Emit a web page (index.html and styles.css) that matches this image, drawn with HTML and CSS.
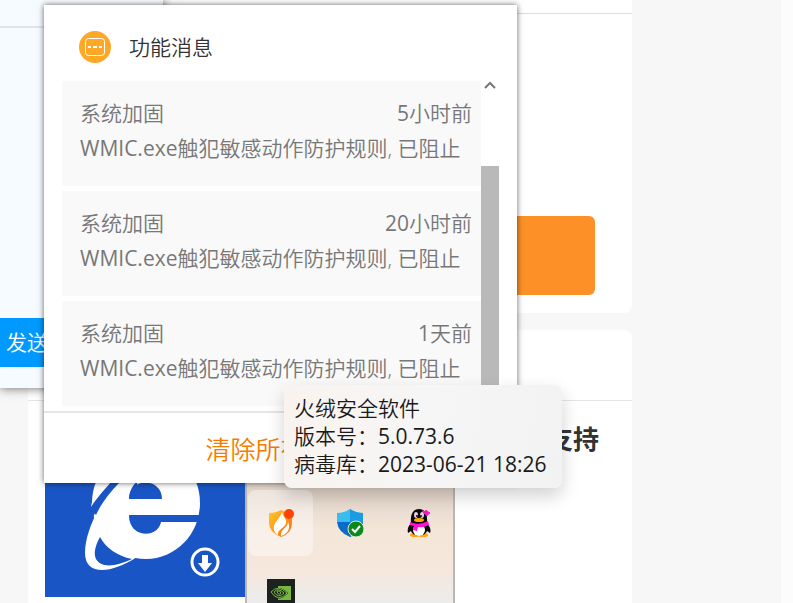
FILE: index.html
```
<!DOCTYPE html>
<html lang="zh-CN">
<head>
    <meta charset="utf-8">
    <meta name="viewport" content="width=device-width, initial-scale=1">
    <title>功能消息</title>
    <link rel="stylesheet" href="styles.css">
</head>
<body>
    <main class="page">
        <section class="card card-top">
            <div class="card-bar"></div>
            <button type="button" class="cta" aria-label="下载"></button>
        </section>
        <section class="card card-bottom">
            <div class="card-head"></div>
            <div class="card-body">
                <svg class="tile" viewBox="0 0 200 140" role="img" aria-label="Internet Explorer">
                    <rect width="200" height="140" fill="#1955c4"/>
                    <!-- globe -->
                    <ellipse cx="101" cy="46" rx="54" ry="56" fill="#fff"/>
                    <path d="M84 42 C84 20 117 20 117 42 Z" fill="#1955c4"/>
                    <path d="M84 58 H157 V65 H116 C113 81 87 81 84 62 Z" fill="#1955c4"/>
                    <!-- orbit -->
                    <path d="M78 18 C62 28 50 40 44 56 L46 66 C52 48 62 36 80 20 Z" fill="#1955c4"/>
                    <path d="M80 20 C58 38 40 72 40 96 C40 119 66 117 92 100 L84 50 Z" fill="#fff"/>
                    <path d="M45 51 C48 41 55 31 66 20 L76 24 C64 36 56 47 51 58 Z" fill="#1955c4"/>
                    <path d="M46 50 C48 39 51 31 56 24 L67 24 C58 34 51 42 46 50 Z" fill="#fff"/>
                    <path d="M84 42 C84 35 88 27 92 25 L92 42 Z" fill="#1955c4"/>
                    <path d="M84 58 H92 V74 C86 70 84 65 84 58 Z" fill="#1955c4"/>
                    <path d="M55 80 C61 91 72 99 87 102 C70 110 56 111 51 102 C48 96 51 87 55 80 Z" fill="#1955c4"/>
                    <circle cx="160" cy="105" r="13" fill="none" stroke="#fff" stroke-width="3"/>
                    <path d="M157 98 h6 v8 h4 l-7 9 -7 -9 h4 z" fill="#fff"/>
                </svg>
                <h2 class="card-title">支持</h2>
            </div>
        </section>
    </main>

    <section class="window chat">
        <div class="chat-toolbar"></div>
        <button type="button" class="send">发送</button>
    </section>

    <section class="window tray">
        <button type="button" class="tray-item active" aria-label="火绒安全软件">
            <svg width="28" height="28" viewBox="0 0 28 28">
                <defs>
                    <linearGradient id="fire" x2="1" y2="1">
                        <stop offset="0" stop-color="#ffc927"/>
                        <stop offset="1" stop-color="#fb6b0c"/>
                    </linearGradient>
                </defs>
                <path d="M2 4 Q9 4 14 1 Q19 4 25 4 V14 Q25 24 14 28 Q2 23 2 14 Z" fill="url(#fire)"/>
                <path d="M15 3 C14 9 5 14 7 21 C8 24 9 25 11 26 C10 20 18 19 19 14 C20 10 16 8 15 3 Z" fill="#fff"/>
                <path d="M21 13 C21 19 13 20 14 27 C21 25 24 19 21 13 Z" fill="#fff"/>
                <circle cx="22" cy="5" r="5" fill="#ff4307"/>
            </svg>
        </button>
        <button type="button" class="tray-item" aria-label="Windows 安全中心">
            <svg width="28" height="28" viewBox="0 0 28 28">
                <path d="M1 4 Q8 4 14 0 Q20 4 27 4 V13 H1 Z" fill="#38bdf0"/>
                <path d="M14 0 Q20 4 27 4 V13 H14 Z" fill="#1b9be4"/>
                <path d="M1 13 H27 Q26 23 14 28 Q2 23 1 13 Z" fill="#0b6bc9"/>
                <path d="M14 13 H27 Q26 23 14 28 Z" fill="#1282d8"/>
                <circle cx="20" cy="20" r="8" fill="#0b8a1c" stroke="#e9e2da"/>
                <path d="M16 20 l3 3 5 -6" fill="none" stroke="#fff" stroke-width="2"/>
            </svg>
        </button>
        <button type="button" class="tray-item" aria-label="QQ">
            <svg width="28" height="28" viewBox="0 0 28 28">
                <ellipse cx="10" cy="26" rx="5" ry="2" fill="#ffa50a"/>
                <ellipse cx="18" cy="26" rx="5" ry="2" fill="#ffa50a"/>
                <path d="M6 14 C5 4 9 0 14 0 C19 0 23 4 22 14 C26 19 26 22 25 24 L22 22 C20 28 8 28 6 22 L3 24 C2 21 3 17 6 14 Z" fill="#080808"/>
                <ellipse cx="14" cy="21" rx="6" ry="6" fill="#fff"/>
                <ellipse cx="11" cy="6" rx="2" ry="3" fill="#e9c9e5"/>
                <ellipse cx="17" cy="6" rx="2" ry="3" fill="#e9c9e5"/>
                <circle cx="12" cy="7" r="1" fill="#000"/>
                <circle cx="16" cy="7" r="1" fill="#000"/>
                <ellipse cx="14" cy="11" rx="5" ry="2" fill="#ffa50a"/>
                <path d="M5 13 Q14 17 23 12 L24 16 Q18 19 13 18 L12 22 L8 21 L9 17 L5 16 Z" fill="#ff10d0"/>
                <path d="M17 2 L20 3 L21 1 L23 3 L25 4 L23 5 L22 7 L20 5 Z" fill="#ff10d0" stroke="#ff10d0"/>
            </svg>
        </button>
        <button type="button" class="tray-item" aria-label="NVIDIA">
            <svg width="28" height="28" viewBox="0 0 28 28">
                <rect width="28" height="28" fill="#1d2120"/>
                <path d="M11 7 H24 V21 H11 Z" fill="#77b83f"/>
                <path d="M3 14 Q11 4 21 14 Q11 25 3 14 Z" fill="#1d2120"/>
                <path d="M4 13 Q11 5 20 14 Q11 24 4 13 Z M7 13 Q11 8 17 14 Q11 20 7 13 Z M10 12 q3 -1 4 2 q-3 3 -4 -2" fill="none" stroke="#77b83f" stroke-width="1"/>
            </svg>
        </button>
    </section>

    <section class="window popup">
        <header class="popup-header">
            <svg width="32" height="32" viewBox="0 0 32 32" aria-hidden="true">
                <circle cx="16" cy="16" r="16" fill="#ffa726"/>
                <rect x="6.5" y="7.5" width="19" height="17" rx="3" fill="none" stroke="#fff"/>
                <path d="M9 16 h3 M14 16 h4 M20 16 h3" stroke="#fff" stroke-width="2"/>
            </svg>
            <h1 class="popup-title">功能消息</h1>
        </header>
        <div class="messages">
            <ul class="message-list">
                <li class="message">
                    <div class="message-head"><span>系统加固</span><time><span class="latin">5</span>小时前</time></div>
                    <p><span class="latin">WMIC.exe</span>触犯敏感动作防护规则, 已阻止</p>
                </li>
                <li class="message">
                    <div class="message-head"><span>系统加固</span><time><span class="latin">20</span>小时前</time></div>
                    <p><span class="latin">WMIC.exe</span>触犯敏感动作防护规则, 已阻止</p>
                </li>
                <li class="message">
                    <div class="message-head"><span>系统加固</span><time><span class="latin">1</span>天前</time></div>
                    <p><span class="latin">WMIC.exe</span>触犯敏感动作防护规则, 已阻止</p>
                </li>
            </ul>
            <div class="scrollbar">
                <svg width="18" height="10" viewBox="0 0 18 10" aria-hidden="true">
                    <path d="M4 7 L9 2 L14 7" fill="none" stroke="#777" stroke-width="2"/>
                </svg>
                <div class="thumb"></div>
            </div>
        </div>
        <footer class="popup-footer">
            <button type="button" class="clear">清除所有消息</button>
        </footer>
    </section>

    <div class="window tooltip" role="tooltip">
        <div>火绒安全软件</div>
        <div>版本号：<span class="latin">5.0.73.6</span></div>
        <div>病毒库：<span class="latin">2023-06-21 18:26</span></div>
    </div>
</body>
</html>
```
FILE: styles.css
```
* {
    box-sizing: border-box;
}
body {
    margin: 0;
    min-height: 100vh;
    position: relative;
    overflow: hidden;
    background: #f7f7f7;
    font-family: 'Open Sans', 'Noto Sans CJK SC', sans-serif;
    font-size: 21px;
    font-weight: 350;
    color: #333;
}
h1, h2, p, ul {
    margin: 0;
    padding: 0;
}
button {
    border: none;
    padding: 0;
    font: inherit;
    cursor: pointer;
}
.latin {
    font-weight: 400;
}

/* page behind the windows */
.page {
    display: flex;
    flex-direction: column;
    gap: 17px;
    height: 100vh;
    padding: 0 149px 0 28px;
    border-right: 12px solid #fcfcfc;
}
.card {
    background: #fff;
    border-radius: 8px;
}
.card-top {
    display: flex;
    flex-direction: column;
    border-top-left-radius: 0;
    border-top-right-radius: 0;
    padding-bottom: 18px;
}
.card-bar {
    height: 14px;
    border-bottom: 1px solid #ddd;
}
.cta {
    align-self: flex-end;
    width: 240px;
    height: 79px;
    margin: 202px 37px 0 0;
    border-radius: 6px;
    background: #fd9127;
}
.card-bottom {
    flex: 1;
    border-bottom-left-radius: 0;
    border-bottom-right-radius: 0;
}
.card-head {
    height: 71px;
    border-bottom: 1px solid #e5e5e5;
}
.card-body {
    display: flex;
    justify-content: space-between;
    padding: 20px 33px 0 17px;
}
.tile {
    width: 200px;
    height: 140px;
    margin-top: 36px;
}
.card-title {
    font-size: 26px;
    line-height: 36px;
    font-weight: 700;
}

/* floating windows */
.window {
    position: absolute;
}
.chat {
    left: 0;
    top: 0;
    width: 163px;
    height: 388px;
    display: flex;
    flex-direction: column;
    justify-content: space-between;
    padding-bottom: 21px;
    background: #f6fbff;
    box-shadow: 0 0 10px rgba(0,0,0,0.6);
}
.chat-toolbar {
    height: 28px;
    border-bottom: 2px solid #dfe5ea;
}
.send {
    height: 49px;
    padding: 0 0 4px 6px;
    background: #0099ff;
    color: #fff;
    text-align: left;
}
.tray {
    left: 245px;
    top: 420px;
    width: 210px;
    height: 183px;
    display: grid;
    grid-template-columns: repeat(3, 65px);
    grid-auto-rows: 66px;
    gap: 4px;
    padding: 70px 1px 0;
    border: solid #b9b6b4;
    border-width: 0 2px;
    background: linear-gradient(#dccfc4 60px, #f5e6da 110px, #f5e7dc 150px, #ececec);
    overflow: hidden;
}
.tray-item {
    display: flex;
    align-items: center;
    justify-content: center;
    padding-bottom: 1px;
    border-radius: 8px;
    background: none;
}
.tray-item.active {
    background: rgba(255,255,255,0.4);
}
.popup {
    left: 44px;
    top: 5px;
    width: 473px;
    background: #fff;
    box-shadow: 0 0 6px rgba(0,0,0,0.6);
}
.popup-header {
    display: flex;
    align-items: center;
    gap: 18px;
    height: 76px;
    padding: 8px 35px 0;
}
.popup-title {
    font-size: 21px;
    line-height: 28px;
    font-weight: 350;
}
.messages {
    display: flex;
    padding: 0 18px 5px;
}
.message-list {
    flex: 1;
    display: flex;
    flex-direction: column;
    gap: 5px;
    list-style: none;
}
.message {
    height: 105px;
    padding: 15px 9px 0 18px;
    background: #f9f9f9;
    color: #777;
    line-height: 35px;
    white-space: nowrap;
}
.message-head {
    display: flex;
    justify-content: space-between;
}
.scrollbar {
    width: 18px;
    display: flex;
    flex-direction: column;
}
.thumb {
    flex: 1;
    margin-top: 75px;
    background: #b9b9b9;
}
.popup-footer {
    display: flex;
    justify-content: center;
    align-items: center;
    height: 72px;
    border-top: 2px solid #e5e5e5;
}
.clear {
    background: none;
    color: #f57c00;
    font-size: 25px;
}
.tooltip {
    left: 284px;
    top: 385px;
    min-width: 278px;
    padding: 9px 10px 10px;
    border-radius: 8px;
    background: linear-gradient(100deg, #f9f3ee, #f6f6f6 50%, #f2f2f2);
    box-shadow: 0 8px 18px rgba(0,0,0,0.18);
    color: #1a1a1a;
    line-height: 28px;
    white-space: nowrap;
}
```
